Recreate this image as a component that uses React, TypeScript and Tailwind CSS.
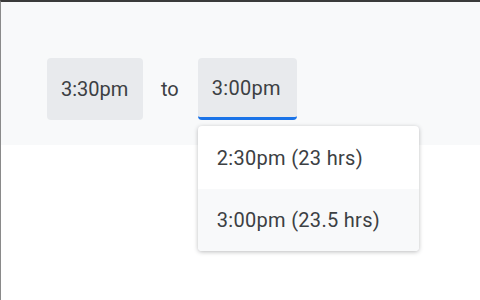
export default function App() {
  return (
    <div className="w-[480px] h-[300px] bg-white border-t-2 border-t-[#3a3a3a] border-l border-l-[#8a8a8a] overflow-hidden font-['Roboto',sans-serif] text-[#3c4043]">
      <div className="bg-[#f8f9fa] h-[143px] pt-[56px] pl-[46px]">
        <div className="flex items-center">
          <div className="h-[62px] w-[96px] pl-[14px] bg-[#e8eaed] rounded-[4px] flex items-center text-[20px]">3:30pm</div>
          <span className="ml-[18px] mr-[19px] text-[20px]">to</span>
          <div className="relative">
            <div className="h-[62px] w-[99px] pl-[14px] bg-[#e8eaed] rounded-[4px] border-b-[3px] border-b-[#1a73e8] flex items-center text-[20px] tracking-[0.3px]">3:00pm</div>
            <div className="absolute left-0 top-[68px] w-[221px] bg-white rounded-[4px] shadow-[0_1px_4px_rgba(60,64,67,0.35)] overflow-hidden z-10">
              <div className="h-[63px] pl-[19px] flex items-center text-[20px] tracking-[0.3px]">2:30pm (23 hrs)</div>
              <div className="h-[62px] pl-[19px] flex items-center text-[20px] tracking-[0.3px] bg-[#f8f9fa]">3:00pm (23.5 hrs)</div>
            </div>
          </div>
        </div>
      </div>
    </div>
  );
}
